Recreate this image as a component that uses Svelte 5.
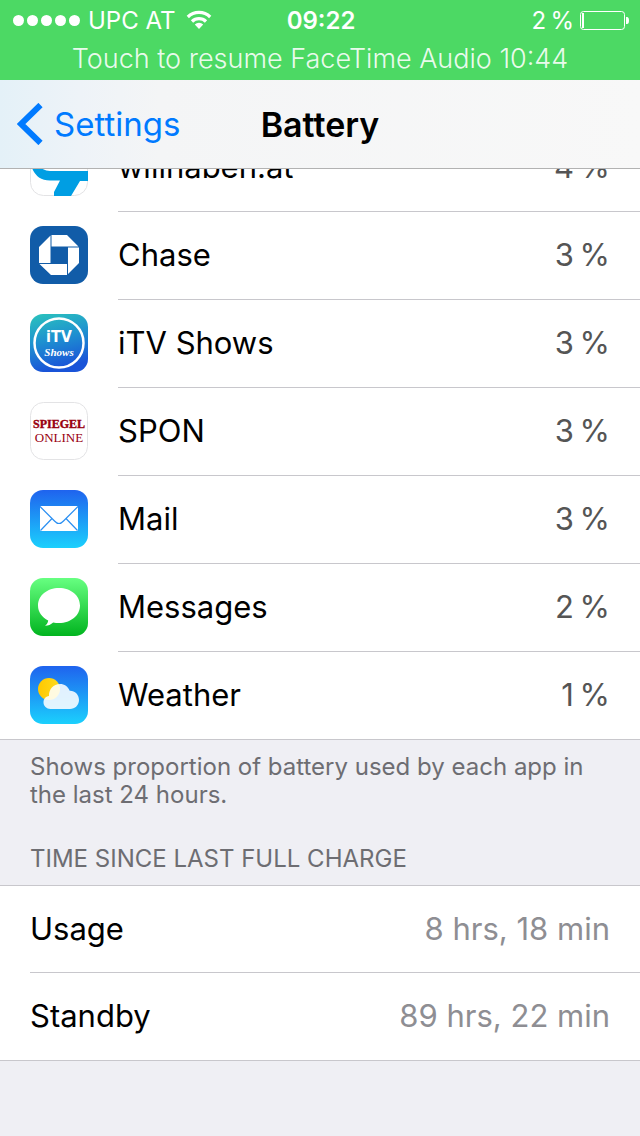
<script lang="ts">
  type App = { id: string; name: string; share: number };

  const apps: App[] = [
    { id: "willhaben", name: "willhaben.at", share: 4 },
    { id: "chase", name: "Chase", share: 3 },
    { id: "itv", name: "iTV Shows", share: 3 },
    { id: "spon", name: "SPON", share: 3 },
    { id: "mail", name: "Mail", share: 3 },
    { id: "messages", name: "Messages", share: 2 },
    { id: "weather", name: "Weather", share: 1 },
  ];

  const times = [
    { label: "Usage", value: "8 hrs, 18 min" },
    { label: "Standby", value: "89 hrs, 22 min" },
  ];

  // thin space between number and sign
  const percent = (n: number) => `${n}\u2009%`;
</script>

<div class="screen">
  <header>
    <div class="status">
      <div class="carrier">
        <span class="signal">
          {#each Array(5) as _}
            <i></i>
          {/each}
        </span>
        <span>UPC AT</span>
        <svg class="wifi" width="26" height="20" viewBox="0 0 26 20" aria-hidden="true">
          <g fill="none" stroke="#fff" stroke-width="3.2">
            <path d="M1.800 7a16 16 0 0 1 22.400 0" />
            <path d="M6 11.500a10 10 0 0 1 14 0" />
          </g>
          <path d="M8.800 14.500a6 6 0 0 1 8.400 0L13 19z" fill="#fff" />
        </svg>
      </div>
      <strong>09:22</strong>
      <div class="power">
        <span>{percent(2)}</span>
        <svg width="50" height="20" viewBox="0 0 50 20" aria-hidden="true">
          <rect x="1.5" y="1.5" width="44" height="18" rx="3" fill="none" stroke="#fff" />
          <rect x="3" y="3" width="2" height="15" fill="#fff" />
          <path d="M47 7h1q2 0 2 3.500t-2 3.500h-1z" fill="#fff" />
        </svg>
      </div>
    </div>
    <button class="call">Touch to resume FaceTime Audio 10:44</button>
    <nav>
      <a href="#settings">
        <svg width="26" height="42" viewBox="0 0 26 42" aria-hidden="true">
          <path d="M23.500 2 4 21l19.500 19" fill="none" stroke="#007aff" stroke-width="6" />
        </svg>
        Settings
      </a>
      <h1>Battery</h1>
    </nav>
  </header>

  <main>
    <ul class="apps">
      {#each apps as app (app.id)}
        <li>
          <svg class="icon" width="58" height="58" viewBox="0 0 58 58" aria-hidden="true">
            {#if app.id === "willhaben"}
              <rect x=".5" y=".5" width="57" height="57" rx="13" fill="#fff" stroke="#e3e3e5" />
              <path d="M2 30q5 12.500 18 12.500h10L24 54v4h17l9-15h8V33H20q-8 0-12-7z" fill="#009ee3" />
            {:else if app.id === "chase"}
              <rect width="58" height="58" rx="13" fill="#115ca8" />
              <path
                fill="#fff"
                d="M21.500 9H37l11.500 11.500h-27zM49 21.500V37L38 48V21.500zM37 49H21L9.500 38H37zM9 37V21L20.500 9.500V37z"
              />
            {:else if app.id === "itv"}
              <defs>
                <linearGradient id="itv-bg" x1="0" y1="0" x2=".25" y2="1">
                  <stop offset="0" stop-color="#2bc4bc" />
                  <stop offset=".5" stop-color="#1e91d0" />
                  <stop offset="1" stop-color="#1953d8" />
                </linearGradient>
              </defs>
              <rect width="58" height="58" rx="13" fill="url(#itv-bg)" />
              <circle cx="29" cy="29" r="24.500" fill="none" stroke="#fff" stroke-width="2.500" />
              <text class="itv" x="29" y="28" text-anchor="middle">iTV</text>
              <text class="shows" x="29" y="42" text-anchor="middle">Shows</text>
            {:else if app.id === "spon"}
              <rect x=".5" y=".5" width="57" height="57" rx="13" fill="#fff" stroke="#e3e3e5" />
              <text class="spiegel" x="29" y="26" text-anchor="middle">SPIEGEL</text>
              <text class="online" x="29" y="40" text-anchor="middle">ONLINE</text>
            {:else if app.id === "mail"}
              <defs>
                <linearGradient id="sky" x2="0" y2="1">
                  <stop offset="0" stop-color="#1f63ee" />
                  <stop offset="1" stop-color="#1bd0fd" />
                </linearGradient>
              </defs>
              <rect width="58" height="58" rx="13" fill="url(#sky)" />
              <rect x="10" y="16" width="38" height="25" rx="1" fill="#fff" />
              <path
                d="m10 16.500 14.500 14.500q4.500 5 9 0L48 16.500M10.500 40.500l11.500-12M47.500 40.500 36 28.500"
                fill="none"
                stroke="#2a8ff2"
                stroke-width="1.200"
              />
            {:else if app.id === "messages"}
              <defs>
                <linearGradient id="grass" x2="0" y2="1">
                  <stop offset="0" stop-color="#67ff81" />
                  <stop offset="1" stop-color="#01b41f" />
                </linearGradient>
              </defs>
              <rect width="58" height="58" rx="13" fill="url(#grass)" />
              <path
                fill="#fff"
                d="M29 10c11.800 0 21 7.600 21 17.500S40.800 45 29 45c-2 0-4-.2-5.800-.6-2.200 2-5 3.300-8.200 3.300 1.800-1.300 3-3 3.200-5.300C12 39.500 8 34 8 27.500 8 17.600 17.200 10 29 10z"
              />
            {:else}
              <defs>
                <linearGradient id="day" x2="0" y2="1">
                  <stop offset="0" stop-color="#1f63ee" />
                  <stop offset="1" stop-color="#1bd0fd" />
                </linearGradient>
                <linearGradient id="sun" x1="0" x2="1">
                  <stop offset="0" stop-color="#ffc800" />
                  <stop offset="1" stop-color="#ffdb1c" />
                </linearGradient>
              </defs>
              <rect width="58" height="58" rx="13" fill="url(#day)" />
              <circle cx="19" cy="23" r="11" fill="url(#sun)" />
              <path
                fill="#fff"
                fill-opacity=".87"
                d="M20.500 43C16.500 43 13.500 40 13.500 36.500c0-3.500 2-6 5.500-6.500C18.500 23.500 23.500 18 30 18c4.500 0 8 2.500 9.700 6.800C44.500 24.500 49 28.500 49 34c0 5-4 9-9 9z"
              />
            {/if}
          </svg>
          <div class="row">
            <span>{app.name}</span>
            <span class="share">{percent(app.share)}</span>
          </div>
        </li>
      {/each}
    </ul>
    <p>Shows proportion of battery used by each app in the last 24 hours.</p>

    <h2>Time since last full charge</h2>
    <dl>
      {#each times as time}
        <div class="row">
          <dt>{time.label}</dt>
          <dd>{time.value}</dd>
        </div>
      {/each}
    </dl>
  </main>
</div>

<style>
  :global(body) {
    margin: 0;
    background: #efeff4;
  }

  .screen {
    min-height: 100vh;
    background: #efeff4;
    color: #000;
    font-family: Inter, "Liberation Sans", sans-serif;
    font-size: 31px;
  }

  header {
    position: sticky;
    top: 0;
    z-index: 1;
    background: #4cd964;
    color: #fff;
  }

  .status {
    display: grid;
    grid-template-columns: 1fr auto 1fr;
    align-items: center;
    height: 40px;
    padding: 0 11px 0 13px;
    font-size: 24px;
  }

  .carrier,
  .power,
  .signal {
    display: flex;
    align-items: center;
  }

  .carrier {
    gap: 8px;
  }

  .wifi {
    margin-left: 3px;
  }

  .power {
    justify-content: flex-end;
    gap: 5px;
  }

  .signal {
    gap: 3px;
  }

  .signal i {
    width: 11px;
    height: 11px;
    border-radius: 50%;
    background: #fff;
  }

  strong {
    font-weight: 600;
  }

  .call {
    display: block;
    width: 100%;
    height: 40px;
    padding: 0 0 4px;
    border: 0;
    background: none;
    color: rgba(255, 255, 255, 0.9);
    font: inherit;
    font-size: 27px;
    font-weight: 300;
  }

  nav {
    display: grid;
    grid-template-columns: 1fr auto 1fr;
    align-items: center;
    height: 88px;
    padding: 0 17px;
    border-bottom: 1px solid #b2b2b2;
    background: linear-gradient(90deg, #e4f1f8, #eef3f8 80px, #f4f5f6 160px, #f8f8f8);
    color: #000;
  }

  nav a {
    display: flex;
    align-items: center;
    gap: 11px;
    color: #007aff;
    font-size: 33px;
    text-decoration: none;
  }

  h1 {
    margin: 0;
    font-size: 34px;
    font-weight: 600;
  }

  ul,
  dl {
    margin: 0;
    padding: 0;
    background: #fff;
    list-style: none;
  }

  /* the list is scrolled partly under the navigation bar */
  .apps {
    margin-top: -45px;
    border-bottom: 1px solid #c8c7cc;
  }

  li {
    display: flex;
    align-items: flex-start;
    gap: 30px;
    padding-left: 30px;
  }

  .icon {
    margin-top: 14px;
  }

  .row {
    flex: 1;
    display: flex;
    align-items: center;
    justify-content: space-between;
    box-sizing: border-box;
    height: 88px;
    padding: 0 30px 2px 0;
    border-bottom: 1px solid #c8c7cc;
  }

  li:last-child .row {
    height: 87px;
    border-bottom: 0;
  }

  .share {
    color: #555;
  }

  p,
  h2 {
    margin: 0;
    padding: 13px 30px 0;
    color: #6d6d72;
    font-size: 24px;
    font-weight: 400;
    line-height: 28px;
  }

  h2 {
    padding: 36px 30px 12px;
    text-transform: uppercase;
  }

  dl {
    padding-left: 30px;
    border: 1px solid #c8c7cc;
    border-width: 1px 0;
  }

  dl .row {
    height: 87px;
  }

  dl .row:last-child {
    border-bottom: 0;
  }

  dd {
    margin: 0;
    color: #8e8e93;
  }

  .itv {
    fill: #fff;
    font: 700 16px "DejaVu Sans Condensed", "DejaVu Sans", sans-serif;
  }

  .shows {
    fill: #fff;
    font: italic 700 11px "Liberation Serif", serif;
  }

  .spiegel,
  .online {
    fill: #990010;
    font: 700 12px "Liberation Serif", serif;
  }

  .spiegel {
    stroke: #990010;
    stroke-width: 0.4;
  }

  .online {
    font-weight: 400;
    font-size: 13px;
  }
</style>
